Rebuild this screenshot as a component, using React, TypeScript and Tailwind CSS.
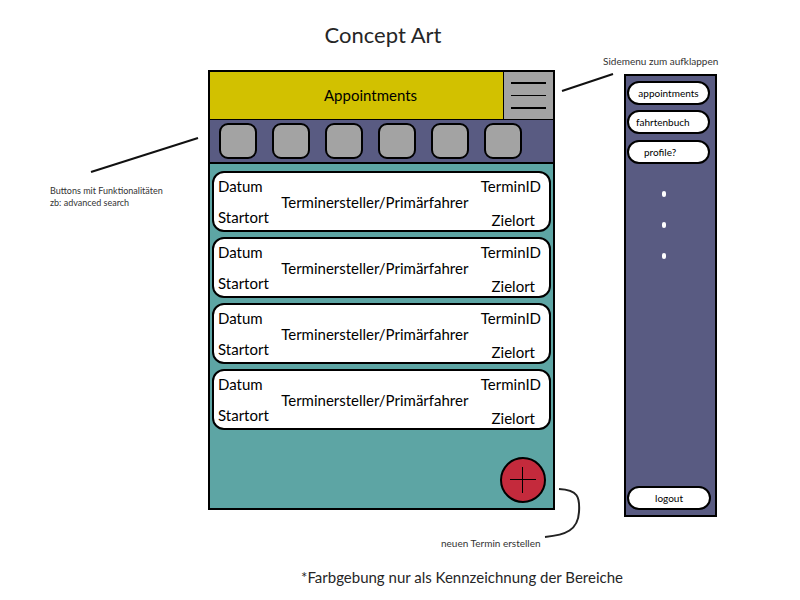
import React from "react"

const cards = [1, 2, 3, 4]
const toolButtons = [1, 2, 3, 4, 5, 6]

function AppointmentCard() {
  return (
    <div className="flex h-[61px] rounded-[12px] border-2 border-black bg-white text-[15px] leading-[18px] text-black">
      <div className="flex flex-col justify-between pl-[4px] py-[4px]">
        <span>Datum</span>
        <span>Startort</span>
      </div>
      <div className="flex flex-1 items-center justify-center">
        <span>Terminersteller/Primärfahrer</span>
      </div>
      <div className="flex flex-col items-end justify-between pr-[8px] pt-[4px] pb-[1px]">
        <span>TerminID</span>
        <span className="mr-[6px]">Zielort</span>
      </div>
    </div>
  )
}

export default function App() {
  return (
    <div className="relative h-[600px] w-[800px] overflow-hidden bg-white text-[#1f1f1f] font-['Lato',sans-serif]">
      {/* Title */}
      <div className="absolute left-0 top-[21px] w-[766px] text-center text-[22px] leading-[28px] text-[#262626]">
        Concept Art
      </div>

      {/* Phone mockup */}
      <div className="absolute left-[208px] top-[70px] flex h-[440px] w-[347px] flex-col border-2 border-black">
        <div className="flex h-[48px] border-b border-black">
          <div className="flex flex-1 items-center justify-center bg-[#d2c100] pl-[28px] text-[15px] text-black">
            Appointments
          </div>
          <div className="flex w-[50px] flex-col items-center justify-center gap-[11px] border-l border-black bg-[#a3a3a3]">
            <div className="h-[1.5px] w-[35px] bg-black" />
            <div className="h-[1.5px] w-[35px] bg-black" />
            <div className="h-[1.5px] w-[35px] bg-black" />
          </div>
        </div>
        <div className="flex h-[44px] items-center gap-[15px] border-b-2 border-black bg-[#595b82] pl-[9px]">
          {toolButtons.map((b) => (
            <div key={b} className="h-[36px] w-[38px] rounded-[9px] border-2 border-black bg-[#a3a3a3]" />
          ))}
        </div>
        <div className="flex flex-1 flex-col bg-[#5da5a4] px-[2px] pt-[7px]">
          <div className="flex flex-col gap-[5px]">
            {cards.map((c) => (
              <AppointmentCard key={c} />
            ))}
          </div>
          <div className="mt-auto mb-[5px] mr-[5px] flex h-[46px] w-[46px] items-center justify-center self-end rounded-full border-2 border-black bg-[#c42a3c]">
            <div className="relative h-[26px] w-[26px]">
              <div className="absolute left-0 top-[12px] h-[1px] w-[26px] bg-black" />
              <div className="absolute left-[12px] top-0 h-[26px] w-[1px] bg-black" />
            </div>
          </div>
        </div>
      </div>

      {/* Side menu */}
      <div className="absolute left-[624px] top-[74px] flex h-[443px] w-[93px] flex-col border-2 border-black bg-[#595b82] pl-[1px] pt-[5px] pb-[5px] text-[10px] text-black">
        <div className="flex flex-col gap-[5px]">
          <div className="flex h-[24px] w-[83px] items-center justify-center rounded-full border-2 border-black bg-white">
            appointments
          </div>
          <div className="flex h-[24px] w-[83px] items-center rounded-full border-2 border-black bg-white pl-[7px]">
            fahrtenbuch
          </div>
          <div className="mt-[1px] flex h-[24px] w-[83px] items-center rounded-full border-2 border-black bg-white pl-[15px]">
            profile?
          </div>
        </div>
        <div className="mt-[27px] flex w-[74px] flex-col items-center gap-[25px]">
          <div className="h-[6px] w-[4px] rounded-full bg-white" />
          <div className="h-[6px] w-[4px] rounded-full bg-white" />
          <div className="h-[6px] w-[4px] rounded-full bg-white" />
        </div>
        <div className="mt-auto flex h-[24px] w-[84px] items-center justify-center rounded-full border-2 border-black bg-white">
          logout
        </div>
      </div>

      {/* Annotations */}
      <div className="absolute left-[603px] top-[54px] text-[10px] leading-[14px] text-[#333]">
        Sidemenu zum aufklappen
      </div>
      <div className="absolute left-[50px] top-[185px] text-[9px] leading-[12px] text-[#333]">
        <div>Buttons mit Funktionalitäten</div>
        <div>zb: advanced search</div>
      </div>
      <div className="absolute left-[441px] top-[536px] text-[10px] leading-[14px] text-[#333]">
        neuen Termin erstellen
      </div>
      <div className="absolute left-0 top-[567px] w-[924px] text-center text-[15px] leading-[20px] text-[#262626]">
        *Farbgebung nur als Kennzeichnung der Bereiche
      </div>

      <svg className="pointer-events-none absolute left-0 top-0" width="800" height="600">
        <line x1="562" y1="91" x2="613" y2="74" stroke="#111" strokeWidth="2" />
        <line x1="91" y1="172" x2="198" y2="138" stroke="#111" strokeWidth="2" />
        <path d="M559 489 C 578 490, 580 497, 579 512 C 578 530, 566 535, 545 537" fill="none" stroke="#222" strokeWidth="2" />
      </svg>
    </div>
  )
}
